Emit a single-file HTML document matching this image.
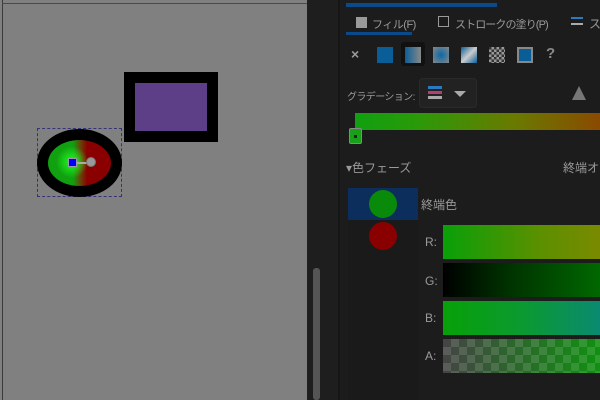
<!DOCTYPE html>
<html><head><meta charset="utf-8"><style>
*{margin:0;padding:0;box-sizing:border-box}
body{width:600px;height:400px;overflow:hidden;background:#1c1c1c;position:relative;font-family:"Liberation Sans","Noto Sans CJK JP",sans-serif;font-size:12px;color:#9a9a9a}
.a{position:absolute;white-space:nowrap}
</style></head><body>
<div class="a" style="left:0;top:0;width:307px;height:400px;background:#808080"></div>
<div class="a" style="left:2px;top:0;width:1px;height:400px;background:#3a3a3a"></div>
<div class="a" style="left:2px;top:3px;width:305px;height:1px;background:#4a4a4a"></div>
<div class="a" style="left:307px;top:0;width:31px;height:400px;background:#1e1e1e"></div>
<div class="a" style="left:313px;top:268px;width:7px;height:132px;background:#555;border-radius:3px"></div>
<div class="a" style="left:338px;top:0;width:2px;height:400px;background:#161616"></div>
<!-- canvas objects -->
<div class="a" style="left:124px;top:72px;width:94px;height:70px;background:#000"></div>
<div class="a" style="left:135px;top:83px;width:72px;height:48px;background:#5d3f88"></div>
<div class="a" style="left:37px;top:128px;width:85px;height:69px;border:1px dashed #33337a"></div>
<div class="a" style="left:37px;top:129px;width:85px;height:68px;border-radius:50%;background:#000"></div>
<div class="a" style="left:48px;top:140px;width:63px;height:46px;border-radius:50%;background:radial-gradient(circle 16px at 24px 22px,#20ff20,rgba(16,200,16,0) 100%),linear-gradient(90deg,#10a010 0%,#10a010 40%,#6a4008 52%,#8a0000 62%,#8a0000 100%)"></div>
<div class="a" style="left:68px;top:158px;width:9px;height:9px;background:#0000ff;border:1px solid #99a"></div>
<div class="a" style="left:77px;top:162px;width:12px;height:2px;background:#aaa"></div>
<div class="a" style="left:86px;top:157px;width:10px;height:10px;border-radius:50%;background:#999;border:1px solid #777"></div>
<!-- panel -->
<div class="a" style="left:346px;top:3px;width:151px;height:4px;background:#0a4a8a"></div>
<div class="a" style="left:356px;top:17px;width:11px;height:11px;background:#9a9a9a"></div>
<div class="a" style="left:372px;top:16px;font-size:11px;letter-spacing:-0.5px">フィル(F)</div>
<div class="a" style="left:346px;top:32px;width:66px;height:3px;background:#0a4a8a"></div>
<div class="a" style="left:438px;top:16px;width:11px;height:11px;border:1px solid #9a9a9a"></div>
<div class="a" style="left:455px;top:16px;font-size:11px;letter-spacing:-0.9px">ストロークの塗り(P)</div>
<div class="a" style="left:571px;top:17px;width:12px;height:2px;background:#2a7ac0"></div>
<div class="a" style="left:571px;top:23px;width:12px;height:2px;background:#aaa"></div>
<div class="a" style="left:589px;top:15px">ス</div>
<div class="a" style="left:351px;top:46px;font-size:14px;font-weight:bold;color:#9a9a9a">×</div>
<div class="a" style="left:377px;top:47px;width:16px;height:16px;background:#0a5e98"></div>
<div class="a" style="left:401px;top:42px;width:24px;height:24px;background:#111;border-radius:3px"></div>
<div class="a" style="left:405px;top:47px;width:16px;height:16px;background:linear-gradient(90deg,#0a5e98,#888)"></div>
<div class="a" style="left:433px;top:47px;width:16px;height:16px;background:radial-gradient(circle,#0a68a8,#888)"></div>
<div class="a" style="left:461px;top:47px;width:16px;height:16px;background:linear-gradient(135deg,#0a5e98,#ccc,#0a5e98)"></div>
<div class="a" style="left:489px;top:47px;width:16px;height:16px;background:repeating-conic-gradient(#999 0 25%,#333 0 50%) 0 0/5px 5px"></div>
<div class="a" style="left:517px;top:47px;width:16px;height:16px;border:2px solid #888;background:#0a5e98"></div>
<div class="a" style="left:546px;top:45px;font-size:15px;font-weight:bold;color:#8a8a8a">?</div>
<div class="a" style="left:347px;top:88px;font-size:10px;letter-spacing:-0.6px">グラデーション:</div>
<div class="a" style="left:419px;top:78px;width:58px;height:30px;background:#222;border-radius:4px;border:1px solid #2a2a2a"></div>
<div class="a" style="left:428px;top:86px;width:14px;height:3px;background:#2a7ac0"></div>
<div class="a" style="left:428px;top:91px;width:14px;height:3px;background:#b04070"></div>
<div class="a" style="left:428px;top:96px;width:14px;height:3px;background:#aaa"></div>
<div class="a" style="left:454px;top:91px;width:0;height:0;border-left:6px solid transparent;border-right:6px solid transparent;border-top:6px solid #aaa"></div>
<div class="a" style="left:572px;top:86px;width:0;height:0;border-left:7px solid transparent;border-right:7px solid transparent;border-bottom:14px solid #777"></div>
<div class="a" style="left:355px;top:113px;width:245px;height:17px;background:linear-gradient(90deg,#10a010,#2a9a08 25%,#6a7a00 65%,#8a4a00)"></div>
<div class="a" style="left:349px;top:128px;width:13px;height:16px;background:#18a018;border:1px solid #888;border-radius:2px"></div>
<div class="a" style="left:354px;top:135px;width:3px;height:3px;background:#222"></div>
<div class="a" style="left:346px;top:159px;font-size:12px">▾色フェーズ</div>
<div class="a" style="left:563px;top:159px">終端オ</div>
<div class="a" style="left:348px;top:188px;width:70px;height:212px;background:#1a1a1a"></div>
<div class="a" style="left:348px;top:188px;width:70px;height:32px;background:#0b2e5c"></div>
<div class="a" style="left:369px;top:190px;width:28px;height:28px;border-radius:50%;background:#0a8a0a"></div>
<div class="a" style="left:369px;top:222px;width:28px;height:28px;border-radius:50%;background:#8a0000"></div>
<div class="a" style="left:421px;top:196px">終端色</div>
<div class="a" style="left:425px;top:235px">R:</div>
<div class="a" style="left:425px;top:274px">G:</div>
<div class="a" style="left:425px;top:311px">B:</div>
<div class="a" style="left:425px;top:349px">A:</div>
<div class="a" style="left:443px;top:225px;width:157px;height:34px;background:linear-gradient(90deg,#08a008,#5a9000 60%,#7a8a00)"></div>
<div class="a" style="left:443px;top:263px;width:157px;height:34px;background:linear-gradient(90deg,#000,#003000 40%,#006800)"></div>
<div class="a" style="left:443px;top:301px;width:157px;height:34px;background:linear-gradient(90deg,#08a008,#0a9a30 50%,#0a8a70)"></div>
<div class="a" style="left:443px;top:339px;width:157px;height:34px;background:repeating-conic-gradient(rgba(255,255,255,.12) 0 25%,transparent 0 50%) 0 0/16px 16px,linear-gradient(90deg,#444,#2a6a2a 50%,#119011)"></div>
</body></html>
